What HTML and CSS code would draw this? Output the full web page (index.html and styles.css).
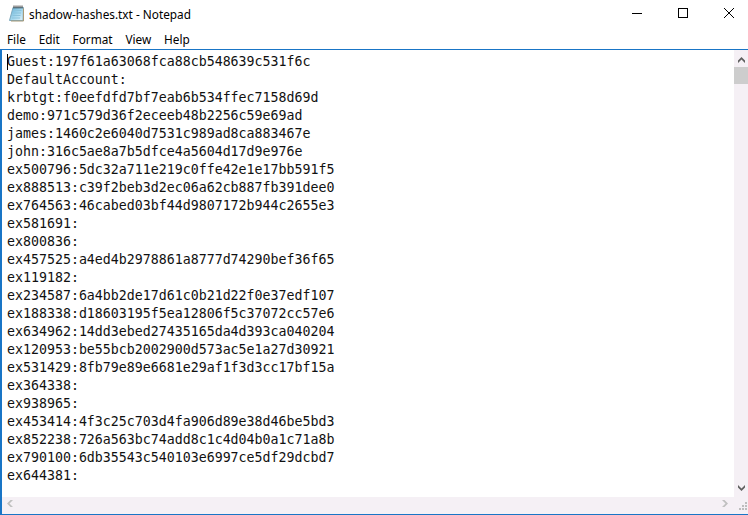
FILE: index.html
```html
<!DOCTYPE html>
<html lang="en">
<head>
<meta charset="utf-8">
<title>shadow-hashes.txt - Notepad</title>
<link rel="stylesheet" href="styles.css">
</head>
<body>
<div class="window">
  <header class="titlebar">
    <svg class="app-icon" width="16" height="17" viewBox="0 0 16 17">
      <defs><linearGradient id="pg" x1="0" y1="0" x2="1" y2="1"><stop offset="0" stop-color="#5fb0d8"/><stop offset=".55" stop-color="#a6d8ee"/><stop offset="1" stop-color="#e4f3fa"/></linearGradient></defs>
      <path d="M4 2.500h10.500L14 15.500H.500z" fill="url(#pg)" stroke="#7fa9bd"/>
      <path d="M14.500 3.500v12.500H2" fill="none" stroke="#a89a78" stroke-width="1"/>
      <path d="M4.500 5.500h8M4 8h8M3.500 10.500h8M3 13h8" stroke="#8cc3dc" stroke-width="1"/>
      <path d="M5 .500v3M7 .500v3M9 .500v3M11 .500v3M13 .500v3" stroke="#3c3c3c" stroke-width="1"/>
    </svg>
    <span class="title">shadow-hashes.txt - Notepad</span>
    <div class="controls">
      <button class="ctl"><svg width="10" height="10" viewBox="0 0 10 10"><path d="M0 5.500h10" stroke="#000"/></svg></button>
      <button class="ctl"><svg width="10" height="10" viewBox="0 0 10 10"><rect x=".5" y=".5" width="9" height="9" fill="none" stroke="#000"/></svg></button>
      <button class="ctl"><svg width="10" height="10" viewBox="0 0 10 10"><path d="M0 0l10 10M10 0L0 10" stroke="#000"/></svg></button>
    </div>
  </header>
  <nav class="menubar"><span>File</span><span>Edit</span><span>Format</span><span>View</span><span>Help</span></nav>
  <main class="client">
    <div class="upper">
      <div class="editor"><span class="caret"></span><pre>Guest:197f61a63068fca88cb548639c531f6c
DefaultAccount:
krbtgt:f0eefdfd7bf7eab6b534ffec7158d69d
demo:971c579d36f2eceeb48b2256c59e69ad
james:1460c2e6040d7531c989ad8ca883467e
john:316c5ae8a7b5dfce4a5604d17d9e976e
ex500796:5dc32a711e219c0ffe42e1e17bb591f5
ex888513:c39f2beb3d2ec06a62cb887fb391dee0
ex764563:46cabed03bf44d9807172b944c2655e3
ex581691:
ex800836:
ex457525:a4ed4b2978861a8777d74290bef36f65
ex119182:
ex234587:6a4bb2de17d61c0b21d22f0e37edf107
ex188338:d18603195f5ea12806f5c37072cc57e6
ex634962:14dd3ebed27435165da4d393ca040204
ex120953:be55bcb2002900d573ac5e1a27d30921
ex531429:8fb79e89e6681e29af1f3d3cc17bf15a
ex364338:
ex938965:
ex453414:4f3c25c703d4fa906d89e38d46be5bd3
ex852238:726a563bc74add8c1c4d04b0a1c71a8b
ex790100:6db35543c540103e6997ce5df29dcbd7
ex644381:</pre></div>
      <div class="vscroll">
        <svg width="14" height="17" viewBox="0 0 14 17"><path d="M7.500 7L11 10.500V13L7.500 9.500 4 13V10.500z" fill="#606060"/></svg>
        <div class="vthumb"></div>
        <svg class="vdown" width="14" height="17" viewBox="0 0 14 17"><path d="M4 5l3.500 3.500L11 5v2.500L7.500 11 4 7.500z" fill="#606060"/></svg>
      </div>
    </div>
    <div class="hscroll">
      <svg width="17" height="17" viewBox="0 0 17 17"><path d="M8.500 3H11L7.500 6.500 11 10H8.500L5 6.500z" fill="#c0c0c0"/></svg>
      <svg class="hright" width="17" height="17" viewBox="0 0 17 17"><path d="M5 3h2.500L11 6.500 7.500 10H5l3.500-3.500z" fill="#c0c0c0"/></svg>
      <svg class="grip" width="14" height="17" viewBox="0 0 14 17"><path d="M11 5h2v2h-2zM8 8h2v2H8zM11 8h2v2h-2zM5 11h2v2H5zM8 11h2v2H8zM11 11h2v2h-2z" fill="#bdbdbd"/></svg>
    </div>
  </main>
</div>
</body>
</html>
```
FILE: styles.css
```css
* { box-sizing: border-box; }
html, body { margin: 0; height: 100%; background: #fff; overflow: hidden; }
.window { width: 748px; height: 515px; display: flex; flex-direction: column; background: #fff; font-family: "Noto Sans", "Liberation Sans", sans-serif; overflow: hidden; }
.titlebar { height: 29px; flex: none; display: flex; align-items: center; padding: 0 0 2px 9px; font-size: 11.8px; color: #000; }
.app-icon { flex: none; }
.title { margin-left: 4px; }
.controls { margin-left: auto; margin-right: -4px; display: flex; height: 26px; align-self: flex-start; }
.ctl { width: 46px; height: 26px; padding: 0; border: 0; background: none; display: flex; align-items: center; justify-content: center; }
.menubar { height: 20px; flex: none; display: flex; align-items: center; padding-left: 7px; gap: 12.800px; font-size: 11.8px; color: #000; }
.client { flex: 1; min-height: 0; display: flex; flex-direction: column; border-top: 1px solid #1975c6; border-left: 2px solid #1975c6; border-bottom: 1px solid #1975c6; }
.upper { flex: 1; min-height: 0; display: flex; }
.editor { flex: 1; position: relative; padding: 3px 0 0 5px; overflow: hidden; }
.caret { position: absolute; left: 5px; top: 4px; width: 1px; height: 16px; background: #000; }
pre { margin: 0; font-family: "DejaVu Sans Mono", monospace; font-size: 13.28px; line-height: 18px; color: #111; }
.vscroll { width: 14px; background: #f5f0f5; display: flex; flex-direction: column; }
.vthumb { height: 17px; background: #cdcdcd; }
.vdown { margin-top: auto; }
.vscroll svg, .hscroll svg { flex: none; display: block; }
.hscroll { height: 17px; flex: none; background: #f5f0f5; display: flex; }
.hright { margin-left: auto; }
```
